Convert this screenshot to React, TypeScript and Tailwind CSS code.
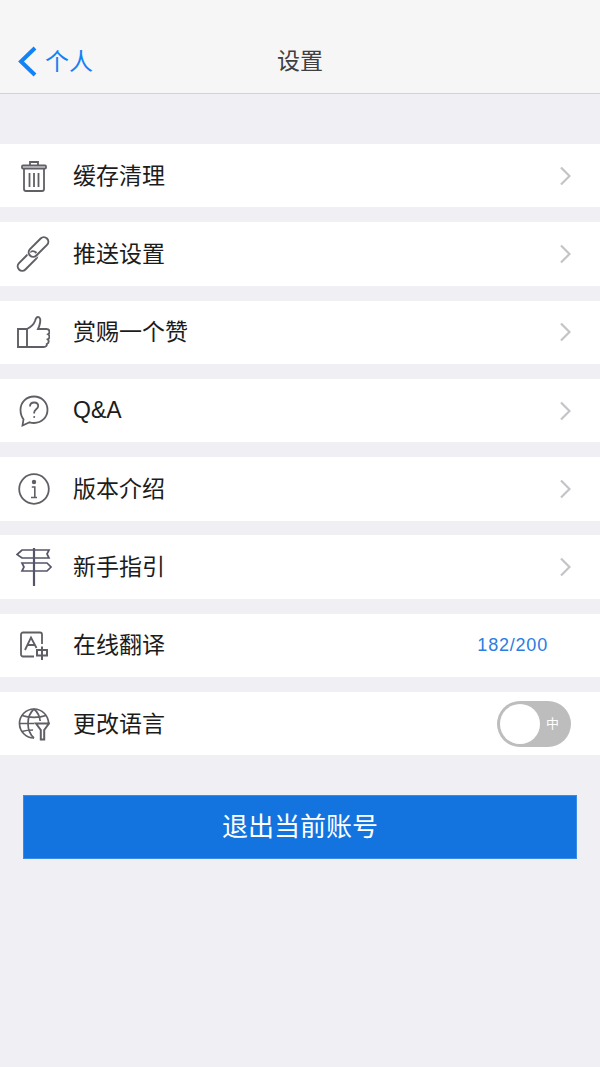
import React from 'react';

const stroke = '#5f5f66';

const TrashIcon = () => (
  <svg width="26" height="32" viewBox="0 0 26 32" fill="none" stroke={stroke} strokeWidth="1.8">
    <path d="M9 5.500V2h8v3.500" />
    <rect x="1" y="5.500" width="24" height="3" rx="1" />
    <path d="M3 8.500V29a2 2 0 0 0 2 2h16a2 2 0 0 0 2-2V8.500" />
    <path d="M8.500 13v14M13 13v14M17.500 13v14" />
  </svg>
);

const LinkIcon = () => (
  <svg width="34" height="34" viewBox="0 0 34 34" fill="none" stroke={stroke} strokeWidth="2" className="overflow-visible">
    <rect x="-1.500" y="19.500" width="24" height="9" rx="4.500" transform="rotate(-45 10.500 24)" />
    <rect x="9.500" y="5.500" width="24" height="9" rx="4.500" transform="rotate(-45 21.500 10)" stroke="#fff" strokeWidth="3.500" />
    <rect x="9.500" y="5.500" width="24" height="9" rx="4.500" transform="rotate(-45 21.500 10)" />
  </svg>
);

const ThumbIcon = () => (
  <svg width="33" height="33" viewBox="0 0 33 33" fill="none" stroke={stroke} strokeWidth="1.9">
    <path d="M1 13h9v18H1z" />
    <path d="M10 13c4-2 7-5 8-8 .5-2 1-4 3-4 2.500 0 2.500 3 2 6-.3 2-1 4-2 6h8.500c2 0 3 1.300 3 2.800 0 1.200-.6 2-1.500 2.500 1 .6 1.500 1.400 1.500 2.500s-.7 2-1.800 2.500c.7.600 1 1.300 1 2.200 0 1.200-.8 2-1.900 2.500.3 1.800-1 3-3 3H10" />
  </svg>
);

const QuestionIcon = () => (
  <svg width="30" height="32" viewBox="0 0 30 32" fill="none" stroke={stroke} strokeWidth="1.8">
    <path d="M15 1.500c7.700 0 13.500 5.800 13.500 13.300S22.700 28 15 28c-1.500 0-3-.2-4.300-.7L3.500 30.500l1-6.200C2.500 21.800 1.500 18.500 1.500 14.800 1.500 7.300 7.300 1.500 15 1.500z" />
    <path d="M11 11.500c0-2.400 1.800-4 4.200-4 2.300 0 4 1.500 4 3.600 0 3-4 3.400-4 6.400v1" />
    <circle cx="15.200" cy="22" r="1" fill={stroke} stroke="none" />
  </svg>
);

const InfoIcon = () => (
  <svg width="32" height="32" viewBox="0 0 32 32" fill="none" stroke={stroke} strokeWidth="1.8">
    <circle cx="16" cy="16" r="14.800" />
    <circle cx="16" cy="9" r="2.200" fill={stroke} stroke="none" />
    <path d="M13.800 14h3v10M13 24.500h6" strokeWidth="1.600" />
  </svg>
);

const SignpostIcon = () => (
  <svg width="36" height="38" viewBox="0 0 36 38" fill="none" stroke="#55556a" strokeWidth="1.700">
    <path d="M18 0v38" strokeWidth="2.200" />
    <path d="M33 2H6L1 6.500 6 10h27l-2-4z" />
    <path d="M6 15h25l4 4-4 4H6l2-4z" />
  </svg>
);

const TranslateIcon = () => (
  <svg width="30" height="30" viewBox="0 0 30 30" fill="none" stroke={stroke} strokeWidth="1.800">
    <path d="M15 26.500H4a2 2 0 0 1-2-2v-20a2 2 0 0 1 2-2h17a2 2 0 0 1 2 2V14" />
    <path d="M6 20l6-12.500 5.500 10.500M8 15h7.500" />
    <rect x="18" y="20" width="10" height="5.500" strokeWidth="2" />
    <path d="M23 16.500V30" strokeWidth="2" />
  </svg>
);

const GlobeIcon = () => (
  <svg width="32" height="34" viewBox="0 0 32 34" fill="none" stroke={stroke} strokeWidth="1.700">
    <path d="M16 31C8 31 1.500 24.500 1.500 16.500S8 2 16 2s14.500 6.500 14.500 14.500" />
    <path d="M16 2c-4 3.500-6 8.500-6 14.500S12 27.500 16 31M16 2c3.500 3 5.600 7 6.200 12" />
    <path d="M4 8.500c7 2.500 17 2.500 24 0M1.500 16.500h15M4 24.500c3-1 7-1.500 11-1.500" />
    <path d="M18 16.500h13l-4.800 6.500v9.500h-3.400V23z" fill="#fff" strokeWidth="2" />
  </svg>
);

const Chevron = () => (
  <svg width="12" height="20" viewBox="0 0 12 20" fill="none" stroke="#c4c4c8" strokeWidth="2.200">
    <path d="M2 1.500L10.500 10 2 18.500" />
  </svg>
);

const rows: { label: string; icon: React.ReactNode; arrow?: boolean; right?: React.ReactNode }[] = [
  { label: '缓存清理', icon: <TrashIcon />, arrow: true },
  { label: '推送设置', icon: <LinkIcon />, arrow: true },
  { label: '赏赐一个赞', icon: <ThumbIcon />, arrow: true },
  { label: 'Q&A', icon: <QuestionIcon />, arrow: true },
  { label: '版本介绍', icon: <InfoIcon />, arrow: true },
  { label: '新手指引', icon: <SignpostIcon />, arrow: true },
  {
    label: '在线翻译',
    icon: <TranslateIcon />,
    right: <span className="mr-[23px] text-[18px] tracking-[0.8px] text-[#2a7de1]">182/200</span>,
  },
  {
    label: '更改语言',
    icon: <GlobeIcon />,
    right: (
      <div className="flex h-[46px] w-[74px] items-center rounded-full bg-[#bdbdbd] p-[3px]">
        <div className="h-10 w-10 rounded-full bg-white" />
        <span className="flex-1 pr-[3px] text-center text-[13px] text-white">中</span>
      </div>
    ),
  },
];

export default function App() {
  return (
    <div
      className="flex h-[1067px] w-[600px] flex-col bg-[#efeff4] text-[#1a1a1a]"
      style={{ fontFamily: '"Liberation Sans", "Noto Sans CJK SC", sans-serif' }}
    >
      <header className="relative flex h-[94px] items-end justify-center border-b border-[#d2d2d4] bg-[#f6f6f7] pb-[16px]">
        <div className="absolute bottom-[16px] left-[18px] flex items-center gap-[8px] text-[#1482f5]">
          <svg width="19" height="31" viewBox="0 0 19 31" fill="none" stroke="#1482f5" strokeWidth="4">
            <path d="M17 2L3 15.500 17 29" />
          </svg>
          <span className="text-[24px] leading-[31px]">个人</span>
        </div>
        <h1 className="text-[23px] leading-[31px] font-normal text-[#404040]">设置</h1>
      </header>

      <div className="mt-[50px] flex flex-col gap-[14.900px]">
        {rows.map((row) => (
          <div key={row.label} className="flex h-[63.400px] items-center bg-white pr-[29px]">
            <div className="flex w-[67px] shrink-0 justify-center">{row.icon}</div>
            <span className="ml-[6px] flex-1 pt-[0.2px] text-[23px] text-[#1c1c1c]">{row.label}</span>
            {row.arrow && <Chevron />}
            {row.right}
          </div>
        ))}
      </div>

      <button className="mx-[23px] mt-10 h-[63.500px] border border-[#3a8ae8] bg-[#1374e0] text-[26px] text-white">
        退出当前账号
      </button>
    </div>
  );
}
